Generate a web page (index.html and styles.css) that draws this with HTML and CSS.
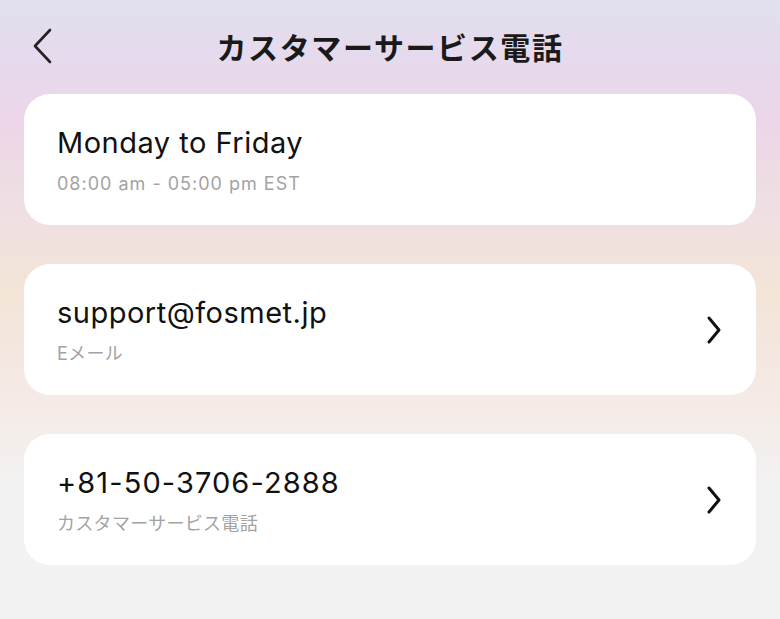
FILE: index.html
```html
<!DOCTYPE html>
<html lang="ja">
<head>
<meta charset="utf-8">
<link rel="stylesheet" href="styles.css">
</head>
<body>
<div class="page">
  <header class="header">
    <span class="back">
      <svg width="26" height="38" viewBox="0 0 26 38"><path d="M21 3 L6 19 L21 35" fill="none" stroke="#222" stroke-width="2.6" stroke-linecap="round" stroke-linejoin="round"/></svg>
    </span>
    <h1 class="title">カスタマーサービス電話</h1>
  </header>
  <main class="list">
    <div class="card">
      <div class="text">
        <div class="main">Monday to Friday</div>
        <div class="sub">08:00 am - 05:00 pm EST</div>
      </div>
    </div>
    <div class="card">
      <div class="text">
        <div class="main">support@fosmet.jp</div>
        <div class="sub jp">Eメール</div>
      </div>
      <svg class="chev" width="16" height="30" viewBox="0 0 16 30"><path d="M3 3 L13 15 L3 27" fill="none" stroke="#111" stroke-width="3" stroke-linecap="round" stroke-linejoin="round"/></svg>
    </div>
    <div class="card">
      <div class="text">
        <div class="main num">+81-50-3706-2888</div>
        <div class="sub jp">カスタマーサービス電話</div>
      </div>
      <svg class="chev" width="16" height="30" viewBox="0 0 16 30"><path d="M3 3 L13 15 L3 27" fill="none" stroke="#111" stroke-width="3" stroke-linecap="round" stroke-linejoin="round"/></svg>
    </div>
  </main>
</div>
</body>
</html>
```
FILE: styles.css
```css
html, body { margin: 0; padding: 0; }
body {
  width: 780px;
  height: 619px;
  overflow: hidden;
  font-family: Inter, "Noto Sans CJK JP", sans-serif;
  background: linear-gradient(180deg, #e1dfee 0px, #e6daed 60px, #ecd6e8 125px, #efdfe2 210px, #f3e4d7 290px, #f4e8e2 370px, #f4ece9 420px, #f2f2f2 490px, #f2f2f2 619px);
}
.page { display: flex; flex-direction: column; }
.header {
  height: 94px;
  display: flex;
  align-items: center;
  justify-content: center;
  position: relative;
}
.back {
  position: absolute;
  left: 29px;
  top: 27px;
  display: flex;
}
.title {
  margin: 0;
  font-family: "Noto Sans CJK JP", sans-serif;
  font-size: 30px;
  font-weight: 700;
  color: #1a1a1a;
  letter-spacing: 1.6px;
  padding-bottom: 3px;
}
.list {
  display: flex;
  flex-direction: column;
  gap: 39px;
  padding: 0 24px;
}
.card {
  height: 131px;
  background: #fff;
  border-radius: 26px;
  display: flex;
  align-items: center;
  justify-content: space-between;
  padding: 0 34px 0 33px;
  box-sizing: border-box;
}
.text { display: flex; flex-direction: column; gap: 13px; padding-top: 2px; }
.main {
  font-size: 29px;
  color: #111;
  line-height: 34px;
  letter-spacing: 0.5px;
}
.main.num { letter-spacing: 1.1px; }
.sub {
  font-size: 18px;
  color: #a3a3a3;
  line-height: 22px;
  letter-spacing: 1px;
}
.sub.jp { letter-spacing: 0.3px; }
.chev { display: block; }
```
